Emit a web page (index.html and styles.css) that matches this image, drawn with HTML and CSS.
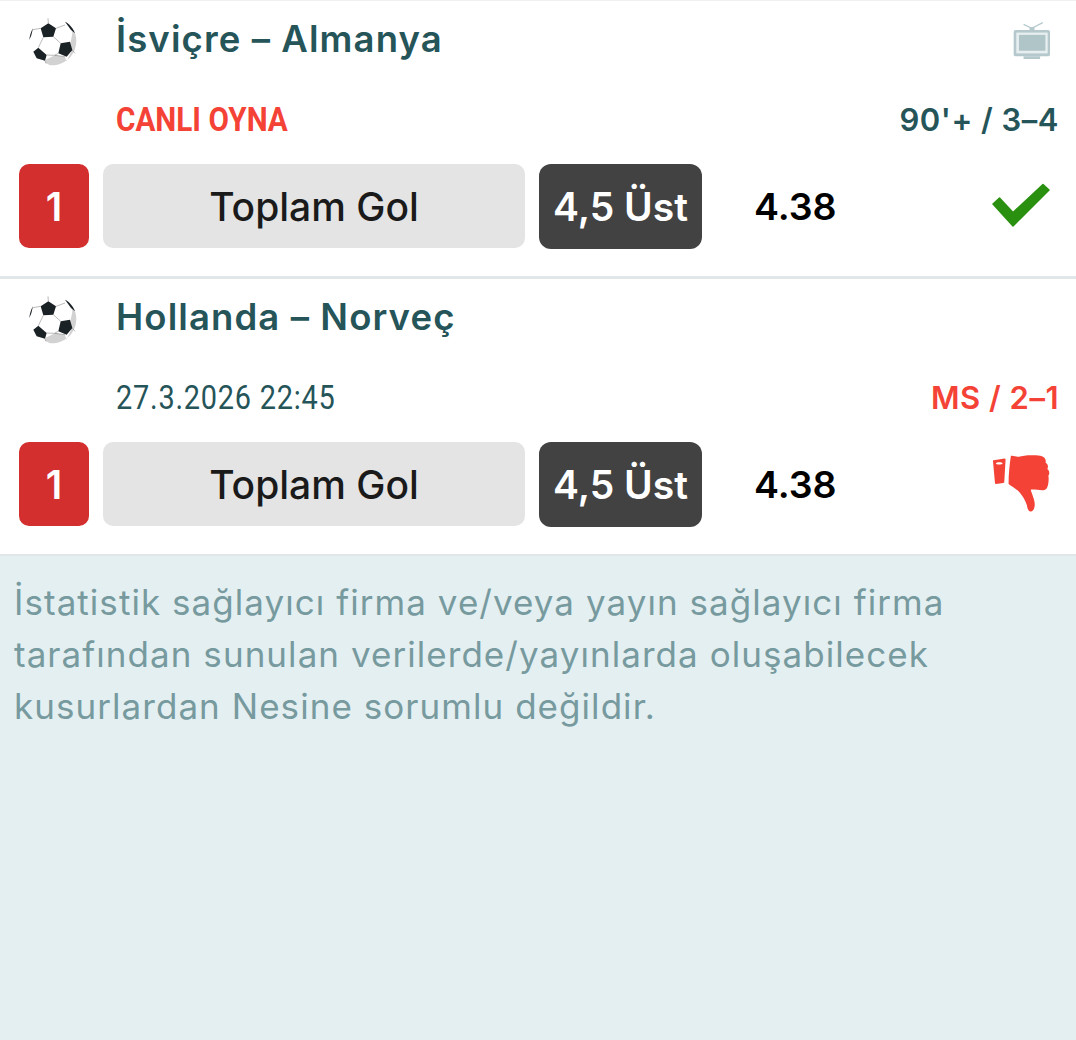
FILE: index.html
```html
<!DOCTYPE html>
<html lang="tr">

<head>
    <meta charset="UTF-8">
    <meta name="viewport" content="width=device-width, initial-scale=1.0">
    <title>Kupon Detay</title>
    <link rel="stylesheet" href="styles.css">
</head>

<body>
    <svg class="defs" width="0" height="0">
        <symbol id="ball" viewBox="84 51 150 150">
            <circle cx="159" cy="126" r="71" fill="#fff" />
            <path d="M216 84c18 22 18 60-4 86-16 18-40 27-62 26l-14-8 0-8 30-15 29 6 4 14 14-28-2-26 6-30z" fill="#d2d2d2" />
            <path d="M122 85l23-15 23 15-8 25-30 2zM182 130l28-5 7 25-17 20-25-10zM115 143l25 22-5 17-25-7-10-20zM195 65c12 6 24 18 30 35l-12-10zM99 85c-6 10-10 22-11 35l6-14z" fill="#1b2226" />
            <path d="M145 70l-1-15M122 85l-23 4M168 85l27-10M160 110l22 20M130 112l-15 31M175 160l-10 5M140 165l25 1M165 166l30 4M217 150l8 10M135 182l3 8" stroke="#777" stroke-width="1.500" fill="none" />
        </symbol>
    </svg>

    <div class="list">
        <div class="match">
            <div class="head">
                <svg class="ball"><use href="#ball" /></svg>
                <div class="teams">İsviçre – Almanya</div>
                <svg class="tv" viewBox="400 60 115 118">
                    <rect x="402" y="87" width="110" height="80" rx="6" fill="#b5c9cc" />
                    <rect x="410" y="95" width="95" height="63" fill="#e6eeef" />
                    <rect x="418" y="102" width="80" height="48" fill="#b0c5c8" />
                    <path d="M432 167h50v8h-50zM450 78h15v9h-15z" fill="#b5c9cc" />
                    <path d="M457 82l-25-12M457 82l33-17" stroke="#b5c9cc" stroke-width="4" fill="none" />
                </svg>
            </div>
            <div class="info">
                <span class="live">CANLI OYNA</span>
                <span class="score">90'+ / 3–4</span>
            </div>
            <div class="bet">
                <div class="num">1</div>
                <div class="market">Toplam Gol</div>
                <div class="pick">4,5 Üst</div>
                <div class="odd">4.38</div>
                <div class="result">
                    <svg class="check" viewBox="0 0 58 46">
                        <path d="M1 21l6.500-6L21 29.500 51 1.500l6 5.500-36 36z" fill="#2a9010" stroke="#2a9010" stroke-width="1.500" stroke-linejoin="round" />
                    </svg>
                </div>
            </div>
        </div>

        <div class="match">
            <div class="head">
                <svg class="ball"><use href="#ball" /></svg>
                <div class="teams">Hollanda – Norveç</div>
            </div>
            <div class="info">
                <span class="date">27.3.2026 22:45</span>
                <span class="score lost">MS / 2–1</span>
            </div>
            <div class="bet">
                <div class="num">1</div>
                <div class="market">Toplam Gol</div>
                <div class="pick">4,5 Üst</div>
                <div class="odd">4.38</div>
                <div class="result">
                    <svg class="thumb" viewBox="95 42 175 180">
                        <path d="M100 60l33-5c2 0 3 1 3 3l-4 68c0 2-1 2-3 3l-22 3c-2 0-3-1-3-3l-6-66c0-2 0-3 2-3zM107 70c0 4 18 4 20 0 0-5-20-5-20 0z" fill="#f44336" fill-rule="evenodd" />
                        <path d="M152 47c8-1 16 3 24 3 8-3 24-5 38-5 18 0 38 1 42 12 2 5 1 9 1 12 8 3 8 12 5 18 6 4 8 14 3 20 2 6 1 28-4 36-3 6-8 8-14 8-12 0-24-3-35-2 2 10 12 30 12 44 0 14-6 24-14 22-6-2-8-10-10-20-4-14-14-28-22-38-10-11-22-17-33-25 0-28 3-58 7-85z" fill="#f44336" />
                    </svg>
                </div>
            </div>
        </div>
    </div>

    <div class="note">
        İstatistik sağlayıcı firma ve/veya yayın sağlayıcı firma tarafından sunulan verilerde/yayınlarda oluşabilecek kusurlardan Nesine sorumlu değildir.
    </div>
</body>

</html>
```

FILE: styles.css
```css
body {
    margin: 0;
    background-color: #e4eff1;
    font-family: Inter, "Liberation Sans", Arial, sans-serif;
}

.defs {
    display: block;
    height: 0;
}

.list {
    background-color: #fff;
    border-top: 1px solid #f0f0f0;
}

.match {
    height: 278px;
    box-sizing: border-box;
    border-bottom: 3px solid #e1e7e9;
    padding: 0 18px 0 19px;
}

.match:last-child {
    height: 277px;
    border-bottom-width: 2px;
}

.head {
    display: flex;
    align-items: center;
    height: 78px;
}

.ball {
    width: 50px;
    height: 50px;
    margin: 3px 0 0 9px;
    flex: none;
}

.teams {
    margin-left: 38px;
    padding-bottom: 2px;
    flex: 1;
    font-size: 36.500px;
    font-weight: 600;
    letter-spacing: 1.100px;
    color: #255459;
}

.tv {
    width: 38px;
    height: 39px;
    margin: 0 7px 0 0;
}

.info {
    display: flex;
    justify-content: space-between;
    align-items: center;
    height: 46px;
    margin-top: 17px;
    padding-left: 97px;
}

.live {
    font-family: Roboto, sans-serif;
    font-size: 34px;
    font-weight: 700;
    color: #f44336;
    display: inline-block;
    transform: scaleX(0.873);
    transform-origin: left center;
}

.date {
    font-family: Roboto, sans-serif;
    font-size: 34px;
    letter-spacing: 0.9px;
    color: #255459;
    display: inline-block;
    transform: scaleX(0.85);
    transform-origin: left center;
}

.score {
    margin-right: -1px;
    font-size: 31px;
    font-weight: 600;
    letter-spacing: 0.5px;
    color: #255459;
}

.score.lost {
    color: #f44336;
}

.bet {
    display: flex;
    align-items: center;
    height: 84px;
    margin-top: 22px;
}

.num {
    width: 70px;
    height: 84px;
    border-radius: 10px;
    background-color: #d32f2f;
    color: #fff;
    font-size: 39px;
    font-weight: 600;
    display: flex;
    align-items: center;
    justify-content: center;
}

.market {
    width: 422px;
    height: 84px;
    margin-left: 14px;
    border-radius: 10px;
    background-color: #e4e4e4;
    color: #1a1a1a;
    font-size: 39px;
    font-weight: 550;
    display: flex;
    align-items: center;
    justify-content: center;
}

.pick {
    width: 163px;
    height: 85px;
    margin-left: 14px;
    border-radius: 12px;
    background-color: #424242;
    color: #fff;
    font-size: 39px;
    font-weight: 600;
    display: flex;
    align-items: center;
    justify-content: center;
    align-self: flex-start;
}

.odd {
    width: 132px;
    margin-left: 52px;
    color: #000;
    font-size: 37.500px;
    font-weight: 600;
}

.result {
    flex: 1;
    display: flex;
    justify-content: flex-end;
    padding-right: 8px;
}

.check {
    width: 58px;
    height: 46px;
}

.thumb {
    width: 58px;
    height: 60px;
}

.note {
    padding: 20px 14px 0;
    font-size: 35px;
    line-height: 52px;
    letter-spacing: 1.050px;
    color: #779a9f;
}
```
